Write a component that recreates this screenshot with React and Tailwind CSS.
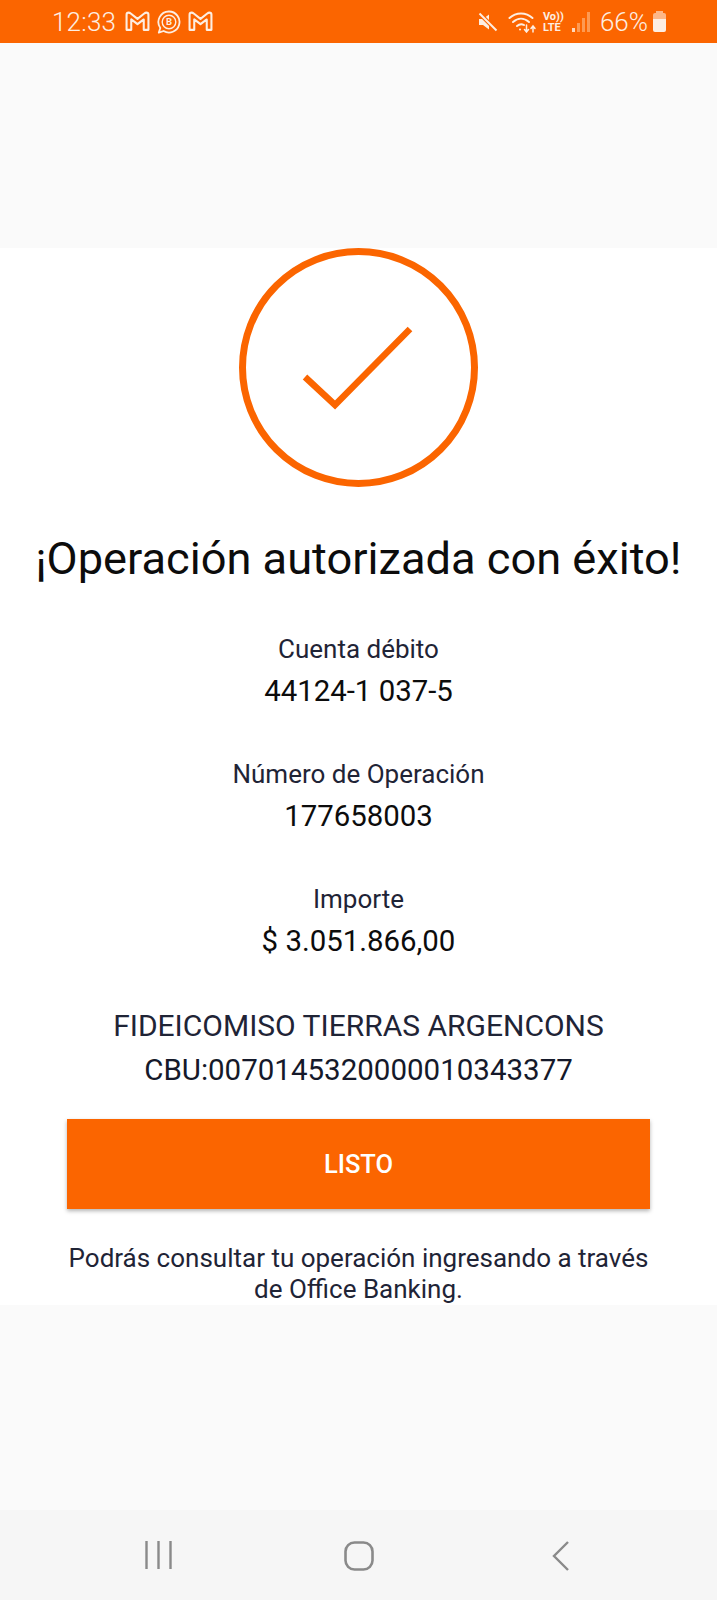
// App.jsx
const ORANGE = "#fb6500";

function GmailGlyph({ className }) {
  return (
    <svg viewBox="0 0 24 20" className={className} fill="none" stroke="currentColor" strokeWidth="2" strokeLinejoin="round">
      <path d="M1.5 3.5 Q1.5 1.5 3.5 1.5 Q4.5 1.5 5.5 2.3 L12 7.5 L18.5 2.3 Q19.5 1.5 20.5 1.5 Q22.5 1.5 22.5 3.5 V18 H18 V8 L12 12.5 L6 8 V18 H1.5 Z" />
    </svg>
  );
}

function BusinessGlyph({ className }) {
  return (
    <svg viewBox="0 0 24 24" className={className} fill="none" stroke="currentColor" strokeWidth="1.8">
      <path d="M12 1.5 A10.5 10.5 0 1 1 6.6 21 L1.8 22.6 L3.3 18 A10.5 10.5 0 0 1 12 1.5 Z" strokeLinejoin="round" />
      <circle cx="12" cy="12" r="6.8" strokeWidth="1.4" />
      <text x="12" y="15.4" textAnchor="middle" fontSize="9.5" fontWeight="700" fill="currentColor" stroke="none" fontFamily="Roboto, sans-serif">B</text>
    </svg>
  );
}

function StatusBar() {
  return (
    <div className="h-[43px] flex items-center justify-between pl-[52px] pr-[51px] text-[#fdeee2]" style={{ background: ORANGE }}>
      <div className="flex items-center">
        <span className="text-[26px] leading-none font-light tracking-[0.2px] mr-[9px]">12:33</span>
        <GmailGlyph className="w-[25px] h-[21px] mr-[7px]" />
        <BusinessGlyph className="w-[24px] h-[24px] mr-[7px]" />
        <GmailGlyph className="w-[25px] h-[21px]" />
      </div>
      <div className="flex items-center">
        {/* muted speaker */}
        <svg viewBox="0 0 20 20" className="w-[20px] h-[20px] mr-[10px]" fill="currentColor">
          <path d="M1 7 H5 L11 2.5 V17.5 L5 13 H1 Z" />
          <path d="M1.5 1.5 L18.5 18.5" stroke={ORANGE} strokeWidth="4" />
          <path d="M1.5 1.5 L18.5 18.5" stroke="currentColor" strokeWidth="2" />
        </svg>
        {/* wifi with arrows */}
        <svg viewBox="0 0 29 22" className="w-[29px] h-[22px] mr-[6px]" fill="none" stroke="currentColor" strokeWidth="2" strokeLinecap="round">
          <path d="M1.5 7 C8 1 18 1 24.5 7" />
          <path d="M5 11 C10 6.5 16 6.5 21 11" />
          <path d="M9 15 C11.5 12.8 14 12.8 16 14" />
          <circle cx="12" cy="18.5" r="1" fill="currentColor" stroke="none" />
          <path d="M18.5 14 V21 M16.5 18.5 L18.5 21 L20.5 18.5" strokeWidth="1.5" />
          <path d="M25 21 V15 M23 17.5 L25 15 L27 17.5" strokeWidth="1.5" />
        </svg>
        <div className="flex flex-col items-start w-[21px] mr-[8px] text-[11px] leading-[11px] font-bold">
          <span>Vo))</span>
          <span>LTE</span>
        </div>
        {/* signal bars, mostly empty */}
        <div className="flex items-end gap-[2px] h-[20px] mr-[10px]">
          <div className="w-[3px] h-[4px] bg-[#fdd9bd]" />
          <div className="w-[3px] h-[9px] bg-[#fd9a52]" />
          <div className="w-[3px] h-[14px] bg-[#fd9a52]" />
          <div className="w-[3px] h-[20px] bg-[#fd9a52]" />
        </div>
        <span className="text-[26px] leading-none font-light mr-[5px]">66%</span>
        {/* battery */}
        <div className="w-[13px] h-[21px] flex flex-col items-center">
          <div className="w-[7px] h-[2px] bg-[#fdb788]" />
          <div className="w-[13px] h-[6px] bg-[#fdb788] rounded-t-[2px]" />
          <div className="w-[13px] h-[13px] bg-[#fdeee2] rounded-b-[2px]" />
        </div>
      </div>
    </div>
  );
}

function Detail({ label, value }) {
  return (
    <div className="flex flex-col items-center">
      <span className="text-[26px] leading-[36px] text-[#1f2436]">{label}</span>
      <span className="text-[29.4px] leading-[40px] mt-[4px] text-[#0c0c0c]">{value}</span>
    </div>
  );
}

function NavBar() {
  return (
    <div className="h-[90px] bg-[#f6f6f6] flex items-start pt-[31px] pl-[145px] text-[#8a8a8a]">
      <svg viewBox="0 0 27 28" className="w-[27px] h-[28px]" stroke="currentColor" strokeWidth="2.4">
        <path d="M1.5 0 V28 M13.5 0 V28 M25.5 0 V28" />
      </svg>
      <svg viewBox="0 0 30 30" className="ml-[172px] w-[30px] h-[30px]" fill="none" stroke="currentColor" strokeWidth="2.6">
        <rect x="1.5" y="1.5" width="27" height="27" rx="9" />
      </svg>
      <svg viewBox="0 0 17 30" className="ml-[178px] w-[17px] h-[30px]" fill="none" stroke="currentColor" strokeWidth="2.4">
        <path d="M16 1 L2 15 L16 29" />
      </svg>
    </div>
  );
}

export default function App() {
  return (
    <div className="w-[717px] h-[1600px] flex flex-col bg-[#fafafa]" style={{ fontFamily: "Roboto, sans-serif" }}>
      <StatusBar />
      <div className="h-[205px]" />

      <main className="h-[1057px] bg-white flex flex-col items-center">
        <svg viewBox="0 0 239 239" className="w-[239px] h-[239px]" fill="none" stroke={ORANGE}>
          <circle cx="119.5" cy="119.5" r="116" strokeWidth="7" />
          <path d="M66 129 L96 157 L171 81" strokeWidth="6.5" />
        </svg>

        <h1 className="mt-[40px] text-[45.2px] leading-[64px] font-normal whitespace-nowrap text-[#0c0c0c]">¡Operación autorizada con éxito!</h1>

        <div className="mt-[40px] flex flex-col items-center gap-[45px]">
          <Detail label="Cuenta débito" value="44124-1 037-5" />
          <Detail label="Número de Operación" value="177658003" />
          <Detail label="Importe" value="$ 3.051.866,00" />
        </div>

        <div className="mt-[42px] flex flex-col items-center text-[#1f2436]">
          <span className="text-[30px] leading-[45px]">FIDEICOMISO TIERRAS ARGENCONS</span>
          <span className="text-[29.5px] leading-[45px] text-[#15192a]">CBU:0070145320000010343377</span>
        </div>

        <button className="mt-[26px] w-[583px] h-[90px] text-white text-[25.5px] font-medium shadow-[0_2px_4px_rgba(0,0,0,0.3)]" style={{ background: ORANGE }}>
          LISTO
        </button>

        <p className="mt-[34px] w-[600px] text-center text-[26px] leading-[31px] text-[#1f2436]">
          Podrás consultar tu operación ingresando a través de Office Banking.
        </p>
      </main>

      <div className="flex-1" />
      <NavBar />
    </div>
  );
}
